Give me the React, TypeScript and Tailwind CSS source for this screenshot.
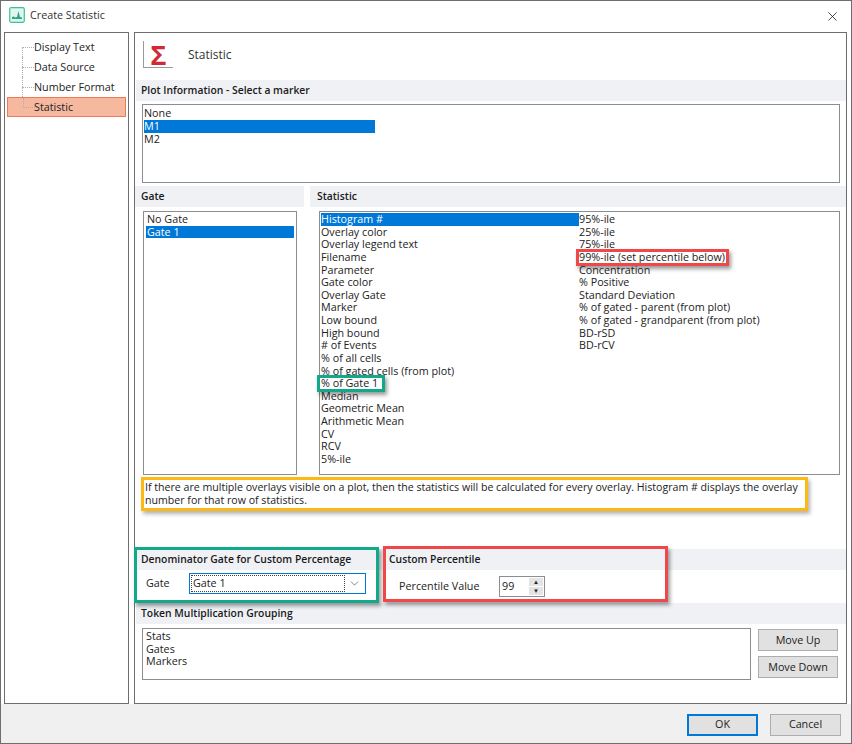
import React from 'react';
import { ChevronDown, X } from 'lucide-react';

const treeItems = ['Display Text', 'Data Source', 'Number Format', 'Statistic'];
const statsLeft = [
  'Histogram #', 'Overlay color', 'Overlay legend text', 'Filename', 'Parameter', 'Gate color',
  'Overlay Gate', 'Marker', 'Low bound', 'High bound', '# of Events', '% of all cells',
  '% of gated cells (from plot)', '% of Gate 1', 'Median', 'Geometric Mean', 'Arithmetic Mean',
  'CV', 'RCV', '5%-ile',
];
const statsRight = [
  '95%-ile', '25%-ile', '75%-ile', '99%-ile (set percentile below)', 'Concentration', '% Positive',
  'Standard Deviation', '% of gated - parent (from plot)', '% of gated - grandparent (from plot)',
  'BD-rSD', 'BD-rCV',
];

const listBorder = 'border border-[#8a8d94] bg-white';
const callout = 'pointer-events-none absolute border-[3px] shadow-[2px_3px_4px_rgba(0,0,0,0.4)]';

const Band = ({ children, className = '' }: { children: React.ReactNode; className?: string }) => (
  <div className={`flex h-[21px] items-center bg-[#f0f1f5] text-[10.35px] font-semibold text-[#1a1a1a] ${className}`}>
    {children}
  </div>
);

const Button = ({ label, className = '' }: { label: string; className?: string }) => (
  <button type="button" className={`flex items-center justify-center bg-[#e1e1e1] text-[10.75px] text-[#222] ${className}`}>
    {label}
  </button>
);

export default function App() {
  return (
    <div
      className="flex h-[744px] w-[852px] flex-col overflow-hidden border border-[#6e6e6e] bg-[#f0f0f0] text-[10.75px] text-[#222]"
      style={{ fontFamily: '"Open Sans", "Noto Sans", sans-serif' }}
    >
      {/* title bar */}
      <div className="flex h-[31px] shrink-0 items-center bg-white pb-[3px] pl-[8px] pr-[11px]">
        <svg width="16" height="16" viewBox="0 0 16 16" className="mr-[5px]">
          <rect x="0.7" y="0.7" width="14.6" height="14.6" rx="1.5" fill="#dff5ee" stroke="#3dbf9c" strokeWidth="1.2" />
          <path d="M3 12V10L5 9.5L6 10.5L8 10L9.5 4L11 10L13 10.5V12Z" fill="#2aa988" />
        </svg>
        <span className="text-[10.75px] text-[#333]">Create Statistic</span>
        <X size={15} strokeWidth={1.3} className="ml-auto mt-[3px] text-[#222]" />
      </div>

      {/* body */}
      <div className="flex h-[672px] shrink-0 gap-[5px] bg-white pl-[3px] pr-[4px]">
        <div className="w-[125px] shrink-0 border border-[#6e6e6e] bg-white pl-[2px] pr-[2px] pt-[4px]">
          {treeItems.map((item, i) => {
            const active = item === 'Statistic';
            return (
              <div
                key={item}
                className={`relative flex h-[20px] items-center ${
                  active ? 'border border-[#ee7a55] bg-[#f6b9a0] pl-[26px]' : 'pl-[27px]'
                }`}
              >
                <span className="absolute left-[15px] top-1/2 w-[12px] border-t border-dotted border-[#b0b0b0]" />
                <span className={`absolute left-[15px] border-l border-dotted border-[#b0b0b0] ${i === 0 ? 'top-1/2 h-[10px]' : 'top-0 h-[10px]'}`} />
                {i > 0 && i < 3 && <span className="absolute bottom-0 left-[15px] h-[10px] border-l border-dotted border-[#b0b0b0]" />}
                {item}
              </div>
            );
          })}
        </div>

        <div className="relative flex min-w-0 flex-1 flex-col border border-[#6e6e6e] bg-white">
          {/* page header */}
          <div className="flex h-[47px] shrink-0 items-center pb-[4px] pl-[8px]">
            <div className="flex h-[27px] w-[30px] items-center justify-center border-b border-l border-[#9a9a9a]">
              <span className="text-[27px] font-bold leading-none text-[#cf2a35]">Σ</span>
            </div>
            <span className="ml-[15px] text-[12px] text-[#333]">Statistic</span>
          </div>

          <Band className="ml-[1px] pl-[5px]">Plot Information - Select a marker</Band>
          <div className={`ml-[7px] mt-[3px] h-[79px] w-[698px] shrink-0 pl-[1px] pt-[2px] leading-[13px] ${listBorder}`}>
            <div>None</div>
            <div className="w-[231px] bg-[#0078d7] text-white">M1</div>
            <div>M2</div>
          </div>

          {/* gate and statistic lists */}
          <div className="mt-[3px] flex shrink-0">
            <div className="flex w-[169px] shrink-0 flex-col">
              <Band className="pl-[6px]">Gate</Band>
              <div className={`ml-[8px] mt-[4px] h-[264px] w-[154px] pl-[2px] pr-[2px] pt-[1px] leading-[12.6px] ${listBorder}`}>
                <div className="pl-[1px]">No Gate</div>
                <div className="bg-[#0078d7] pl-[1px] text-white">Gate 1</div>
              </div>
            </div>
            <div className="ml-[6px] flex min-w-0 flex-1 flex-col">
              <Band className="pl-[7px]">Statistic</Band>
              <div className={`ml-[9px] mt-[4px] flex h-[264px] w-[521px] pl-[1px] pt-[1px] leading-[12.63px] ${listBorder}`}>
                <div className="w-[258px] shrink-0">
                  {statsLeft.map((s, i) => (
                    <div key={s} className={`relative ${i === 0 ? 'bg-[#0078d7] text-white' : ''}`}>
                      {s}
                      {s === '% of Gate 1' && <span className={`${callout} -left-[4px] -top-[2px] h-[17px] w-[68px] border-[#12a88a]`} />}
                    </div>
                  ))}
                </div>
                <div className="min-w-0 flex-1">
                  {statsRight.map((s) => (
                    <div key={s} className="relative">
                      {s}
                      {s.startsWith('99%') && <span className={`${callout} -left-[3px] -top-[2px] h-[17px] w-[153px] border-[#f04848]`} />}
                    </div>
                  ))}
                </div>
              </div>
            </div>
          </div>

          {/* note */}
          <div className="ml-[6px] mt-[2px] h-[34px] w-[667px] shrink-0 border-[3px] border-[#fdb913] pl-[1px] pt-[1px] text-[10.6px] leading-[13px] shadow-[2px_3px_4px_rgba(0,0,0,0.3)]">
            If there are multiple overlays visible on a plot, then the statistics will be calculated for every overlay. Histogram # displays the overlay number for that row of statistics.
          </div>

          {/* custom gate and percentile */}
          <div className="mt-[38px] flex h-[54px] shrink-0">
            <div className="relative w-[249px] shrink-0">
              <Band className="pl-[6px]">Denominator Gate for Custom Percentage</Band>
              <div className="flex h-[27px] items-center pl-[11px]">
                <span className="w-[43px]">Gate</span>
                <div className="flex h-[21px] w-[177px] items-center border border-[#0078d7] p-[1px]">
                  <div className="flex h-full flex-1 items-center border border-dotted border-[#444] pl-[1px]">Gate 1</div>
                  <ChevronDown size={13} strokeWidth={1.3} className="mx-[3px] text-[#555]" />
                </div>
              </div>
              <span className={`${callout} -top-[2px] -left-[1px] h-[56px] w-[245px] border-[#12a88a]`} />
            </div>
            <div className="relative min-w-0 flex-1">
              <Band className="pl-[5px]">Custom Percentile</Band>
              <div className="flex h-[33px] items-center pl-[15px]">
                <span className="w-[100px]">Percentile Value</span>
                <div className="flex h-[21px] w-[46px] border border-[#8a8d94]">
                  <span className="flex-1 pl-[2px] leading-[19px]">99</span>
                  <div className="flex w-[16px] flex-col gap-[1px] p-[1px]">
                    <span className="flex flex-1 items-center justify-center bg-[#e4e4e4] text-[6px] leading-none">▲</span>
                    <span className="flex flex-1 items-center justify-center bg-[#e4e4e4] text-[6px] leading-none">▼</span>
                  </div>
                </div>
              </div>
              <span className={`${callout} -top-[3px] -left-[1px] h-[56px] w-[285px] border-[#f04848]`} />
            </div>
          </div>

          {/* token grouping */}
          <Band className="ml-[1px] pl-[5px]">Token Multiplication Grouping</Band>
          <div className="ml-[7px] mt-[4px] flex shrink-0 gap-[7px]">
            <div className={`h-[52px] w-[609px] pl-[3px] pt-[1px] leading-[12.6px] ${listBorder}`}>
              <div>Stats</div>
              <div>Gates</div>
              <div>Markers</div>
            </div>
            <div className="flex w-[80px] flex-col gap-[5px] pt-[1px]">
              <Button label="Move Up" className="h-[22px] border border-[#adadad]" />
              <Button label="Move Down" className="h-[22px] border border-[#adadad]" />
            </div>
          </div>
        </div>
      </div>

      {/* footer */}
      <div className="flex flex-1 items-center justify-end gap-[12px] pr-[10px] pt-[2px]">
        <Button label="OK" className="h-[22px] w-[71px] border-2 border-[#0078d7]" />
        <Button label="Cancel" className="h-[22px] w-[71px] border border-[#adadad]" />
      </div>
    </div>
  );
}
